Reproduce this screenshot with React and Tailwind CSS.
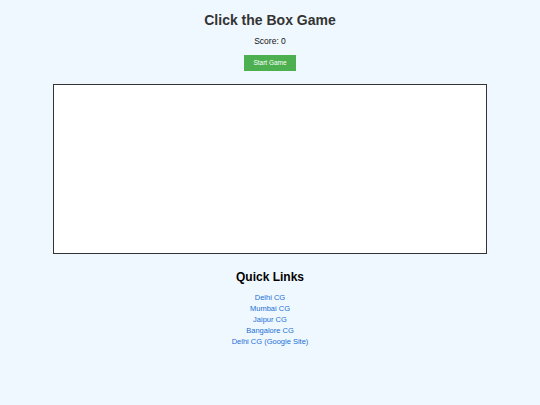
export default function App() {
  const links = ['Delhi CG', 'Mumbai CG', 'Jaipur CG', 'Bangalore CG', 'Delhi CG (Google Site)'];
  return (
    <div className="min-h-[405px] bg-[#f0f8ff] flex flex-col items-center font-['Liberation_Sans',Arial,sans-serif]">
      <h1 className="mt-[12px] text-[14px] leading-[16px] font-bold text-[#333]">Click the Box Game</h1>
      <p className="mt-[8px] text-[8.5px] leading-[10px] text-[#111]">Score: 0</p>
      <button className="mt-[9px] h-[16px] w-[52px] bg-[#4caf50] text-white text-[6.5px] leading-[16px]">
        Start Game
      </button>
      <div className="mt-[13px] w-[434px] h-[170px] bg-white border border-[#333]"></div>
      <h2 className="mt-[16px] text-[12px] leading-[14px] font-bold text-black">Quick Links</h2>
      <ul className="mt-[8px] flex flex-col items-center">
        {links.map((l) => (
          <li key={l} className="text-[7.5px] leading-[11px]">
            <a href="#" className="text-[#1a6fd6]">{l}</a>
          </li>
        ))}
      </ul>
    </div>
  );
}
